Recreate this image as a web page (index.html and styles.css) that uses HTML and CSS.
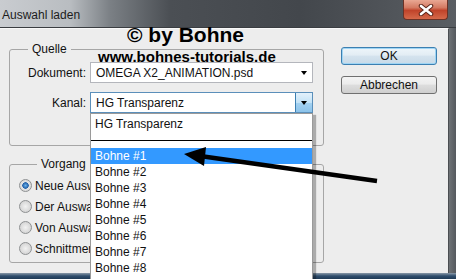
FILE: index.html
```html
<!DOCTYPE html>
<html lang="de">
<head>
    <meta charset="UTF-8">
    <meta name="viewport" content="width=device-width, initial-scale=1.0">
    <title>Auswahl laden</title>
    <link rel="stylesheet" href="styles.css">
</head>
<body>
    <div class="window">
        <div class="titlebar">
            <span class="title">Auswahl laden</span>
            <span class="close-btn">
                <svg width="16" height="12" viewBox="0 0 16 12">
                    <path d="M3 2 L13 10 M13 2 L3 10" stroke="#5a2418" stroke-width="4.5" stroke-linecap="round"/>
                    <path d="M3 2 L13 10 M13 2 L3 10" stroke="#fff" stroke-width="2.6" stroke-linecap="round"/>
                </svg>
            </span>
        </div>

        <div class="frame">
            <div class="client">
                <div class="groups">
                    <fieldset class="group group-source">
                        <legend>Quelle</legend>
                        <div class="field">
                            <label class="field-label">Dokument:</label>
                            <div class="combo">
                                <span class="combo-value">OMEGA X2_ANIMATION.psd</span>
                                <span class="combo-btn"><span class="caret"></span></span>
                            </div>
                        </div>
                        <div class="field">
                            <label class="field-label">Kanal:</label>
                            <div class="combo combo-open">
                                <span class="combo-value">HG Transparenz</span>
                                <span class="combo-btn"><span class="caret"></span></span>
                            </div>
                        </div>
                    </fieldset>

                    <fieldset class="group group-op">
                        <legend>Vorgang</legend>
                        <label class="radio-row"><span class="radio checked"></span><span class="radio-text">Neue Auswahl</span></label>
                        <label class="radio-row"><span class="radio"></span><span class="radio-text">Der Auswahl hinzufügen</span></label>
                        <label class="radio-row"><span class="radio"></span><span class="radio-text">Von Auswahl subtrahieren</span></label>
                        <label class="radio-row"><span class="radio"></span><span class="radio-text">Schnittmenge mit Auswahl bilden</span></label>
                    </fieldset>
                </div>

                <div class="buttons">
                    <button class="btn btn-default">OK</button>
                    <button class="btn">Abbrechen</button>
                </div>
            </div>
            <div class="frame-right"></div>
        </div>
        <div class="frame-bottom"></div>

        <!-- aufgeklappte Kanal-Liste -->
        <ul class="dropdown">
            <li>HG Transparenz</li>
            <li class="separator"></li>
            <li class="selected">Bohne #1</li>
            <li>Bohne #2</li>
            <li>Bohne #3</li>
            <li>Bohne #4</li>
            <li>Bohne #5</li>
            <li>Bohne #6</li>
            <li>Bohne #7</li>
            <li>Bohne #8</li>
        </ul>

        <div class="watermark">
            <div class="wm-title">© by Bohne</div>
            <div class="wm-url">www.bohnes-tutorials.de</div>
        </div>

        <svg class="arrow" width="456" height="279" viewBox="0 0 456 279">
            <line x1="200" y1="156" x2="377" y2="181" stroke="#000" stroke-width="4.5"/>
            <polygon points="184,154 206,147 204,166" fill="#000"/>
        </svg>
    </div>
</body>
</html>
```

FILE: styles.css
```css
body {
    margin: 0;
    font-family: "Liberation Sans", Arial, sans-serif;
    font-size: 12px;
    color: #111;
}
.window {
    position: relative;
    width: 456px;
    height: 279px;
    display: flex;
    flex-direction: column;
    overflow: hidden;
    background: #5d6166;
}
.titlebar {
    height: 28px;
    box-sizing: border-box;
    display: flex;
    justify-content: space-between;
    border-bottom: 1px solid #3a3d41;
    background: linear-gradient(to right, #c9ccd0 0, #b9bdc1 70px, #7b8085 110px, #4b4f54 170px, #43474c 300px, #5a5e63 100%);
}
.title {
    padding: 8px 0 0 2px;
    color: #1c1c1c;
}
.close-btn {
    width: 45px;
    height: 20px;
    margin-right: 8px;
    box-sizing: border-box;
    display: flex;
    align-items: center;
    justify-content: center;
    border: 1px solid #6b3226;
    border-top: none;
    border-radius: 0 0 4px 4px;
    background: linear-gradient(#e9a894 0, #d47a62 40%, #c0432a 55%, #d5694a 100%);
}
.frame {
    flex: 1;
    display: flex;
}
.client {
    flex: 1;
    display: flex;
    padding: 0 0 0 9px;
    background: #ededed;
    border-top: 1px solid #f8f8f8;
    border-right: 1px solid #4a4d51;
}
.frame-right {
    width: 7px;
    background: linear-gradient(to right, #6e7276, #55595e);
}
.frame-bottom {
    height: 6px;
    background: linear-gradient(#8a99a8, #2f4d6c 50%, #203a56);
}
.groups {
    width: 315px;
}
.group {
    margin: 0;
    padding: 0 0 0 0;
    border: 1px solid #a6a6a6;
    border-radius: 3px;
    box-sizing: border-box;
    width: 315px;
}
.group legend {
    margin-left: 18px;
    padding: 0 4px;
    line-height: 14px;
}
.group-source {
    margin-top: 13px;
    height: 104px;
    padding-top: 6px;
}
.group-op {
    margin-top: 11px;
    height: 106px;
    padding: 4px 0 0 9px;
}
.field {
    display: flex;
    align-items: center;
    height: 21px;
    margin-bottom: 9px;
}
.field-label {
    width: 76px;
    text-align: right;
    margin-right: 4px;
}
.combo {
    width: 223px;
    height: 21px;
    box-sizing: border-box;
    display: flex;
    align-items: center;
    background: #fff;
    border: 1px solid #b4b6bc;
}
.combo-value {
    flex: 1;
    padding-left: 5px;
}
.combo-btn {
    width: 16px;
    height: 19px;
    display: flex;
    align-items: center;
    justify-content: center;
}
.combo-open {
    border-color: #5b8fba;
}
.combo-open .combo-btn {
    border-left: 1px solid #3c7fb1;
    background: linear-gradient(#e3f1fb 0, #c4e3f7 50%, #a5d2f1 51%, #8cc3ea 100%);
}
.caret {
    width: 0;
    height: 0;
    border-style: solid;
    border-width: 4px 3.5px 0;
    border-color: #000 transparent transparent;
}
/* die Liste deckt die Optionen ab x=90 zu */
.radio-row {
    display: flex;
    align-items: center;
    width: 71px;
    height: 21px;
    overflow: hidden;
    white-space: nowrap;
}
.radio {
    flex: none;
    width: 13px;
    height: 13px;
    box-sizing: border-box;
    margin-right: 3px;
    border-radius: 50%;
    border: 1px solid #8e9092;
    background: radial-gradient(circle, #f2f2f2 0, #d6d6d6 70%, #c8c8c8 100%);
}
.radio.checked {
    background: radial-gradient(circle, #6db3ea 0, #1f5ea8 38%, #e4e4e4 45%, #d0d0d0 100%);
}
.buttons {
    display: flex;
    flex-direction: column;
    gap: 11px;
    margin: 18px 0 0 17px;
}
.btn {
    width: 96px;
    height: 18px;
    padding: 0;
    font: inherit;
    color: #111;
    border: 1px solid #707070;
    border-radius: 3px;
    background: linear-gradient(#f4f4f4 0, #ebebeb 45%, #dddddd 50%, #cfcfcf 100%);
}
.btn-default {
    border-color: #3c7fb1;
    box-shadow: inset 0 0 0 1px #9fd5f4;
    background: linear-gradient(#eef5fa 0, #e2edf4 45%, #d4e3ee 50%, #c8dae8 100%);
}
.dropdown {
    position: absolute;
    left: 90px;
    top: 113px;
    width: 223px;
    height: 166px;
    box-sizing: border-box;
    margin: 0;
    padding: 2px 0 0;
    list-style: none;
    background: #fff;
    border: 1px solid #9a9a9a;
    border-bottom: none;
    box-shadow: 3px 2px 1px rgba(0, 0, 0, 0.28);
}
.dropdown li {
    height: 16px;
    line-height: 16px;
    padding-left: 4px;
    color: #111;
}
.dropdown .separator {
    position: relative;
}
.dropdown .separator::after {
    content: "";
    position: absolute;
    left: 0;
    right: 0;
    top: 8px;
    border-top: 1px solid #000;
}
.dropdown .selected {
    background: #3399ff;
    color: #fff;
}
.watermark {
    position: absolute;
    left: 98px;
    top: 24px;
    font-weight: bold;
    color: #000;
}
.wm-title {
    font-size: 21px;
    line-height: 21px;
    margin-left: 29px;
}
.wm-url {
    font-size: 15px;
    line-height: 15px;
    margin-top: 4px;
}
.arrow {
    position: absolute;
    left: 0;
    top: 0;
    pointer-events: none;
}
```
